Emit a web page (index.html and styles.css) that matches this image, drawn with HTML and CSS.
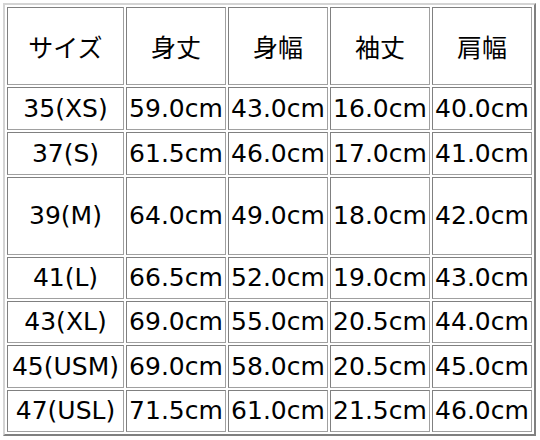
FILE: index.html
```html
<!DOCTYPE html>
<html lang="ja">
<head>
<meta charset="utf-8">
<title>サイズ表</title>
<link rel="stylesheet" href="styles.css">
</head>
<body>
<table class="size-table">
  <tr class="row-tall">
    <td class="col-size head">サイズ</td>
    <td class="col-val head">身丈</td>
    <td class="col-val head">身幅</td>
    <td class="col-val head">袖丈</td>
    <td class="col-val head">肩幅</td>
  </tr>
  <tr class="row-43">
    <td>35(XS)</td><td>59.0cm</td><td>43.0cm</td><td>16.0cm</td><td>40.0cm</td>
  </tr>
  <tr class="row-43">
    <td>37(S)</td><td>61.5cm</td><td>46.0cm</td><td>17.0cm</td><td>41.0cm</td>
  </tr>
  <tr class="row-tall">
    <td>39(M)</td><td>64.0cm</td><td>49.0cm</td><td>18.0cm</td><td>42.0cm</td>
  </tr>
  <tr class="row-42">
    <td>41(L)</td><td>66.5cm</td><td>52.0cm</td><td>19.0cm</td><td>43.0cm</td>
  </tr>
  <tr class="row-42">
    <td>43(XL)</td><td>69.0cm</td><td>55.0cm</td><td>20.5cm</td><td>44.0cm</td>
  </tr>
  <tr class="row-43">
    <td>45(USM)</td><td>69.0cm</td><td>58.0cm</td><td>20.5cm</td><td>45.0cm</td>
  </tr>
  <tr class="row-42">
    <td>47(USL)</td><td>71.5cm</td><td>61.0cm</td><td>21.5cm</td><td>46.0cm</td>
  </tr>
</table>
</body>
</html>
```
FILE: styles.css
```css
html, body {
  margin: 0;
  padding: 0;
  background: #ffffff;
}

body {
  padding: 3px;
  font-family: "DejaVu Sans", "Noto Sans CJK JP", sans-serif;
  font-size: 25px;
  color: #000000;
}

.size-table {
  border-collapse: separate;
  border-spacing: 2px;
  border-width: 2px;
  border-style: solid;
  border-color: #d4d4d4 #808080 #808080 #d4d4d4;
}

.size-table td {
  box-sizing: border-box;
  border: 1px solid;
  border-color: #808080 #a0a0a0 #a0a0a0 #808080;
  padding: 0;
  text-align: center;
  vertical-align: middle;
  white-space: nowrap;
  line-height: 28px;
}

.size-table td.head {
  font-family: "Noto Sans CJK JP", sans-serif;
  font-weight: 400;
  font-size: 25px;
}

.col-size {
  width: 117px;
}

.col-val {
  width: 100px;
}

.row-tall td {
  height: 78px;
}

.row-43 td {
  height: 43px;
}

.row-42 td {
  height: 42px;
}
```
